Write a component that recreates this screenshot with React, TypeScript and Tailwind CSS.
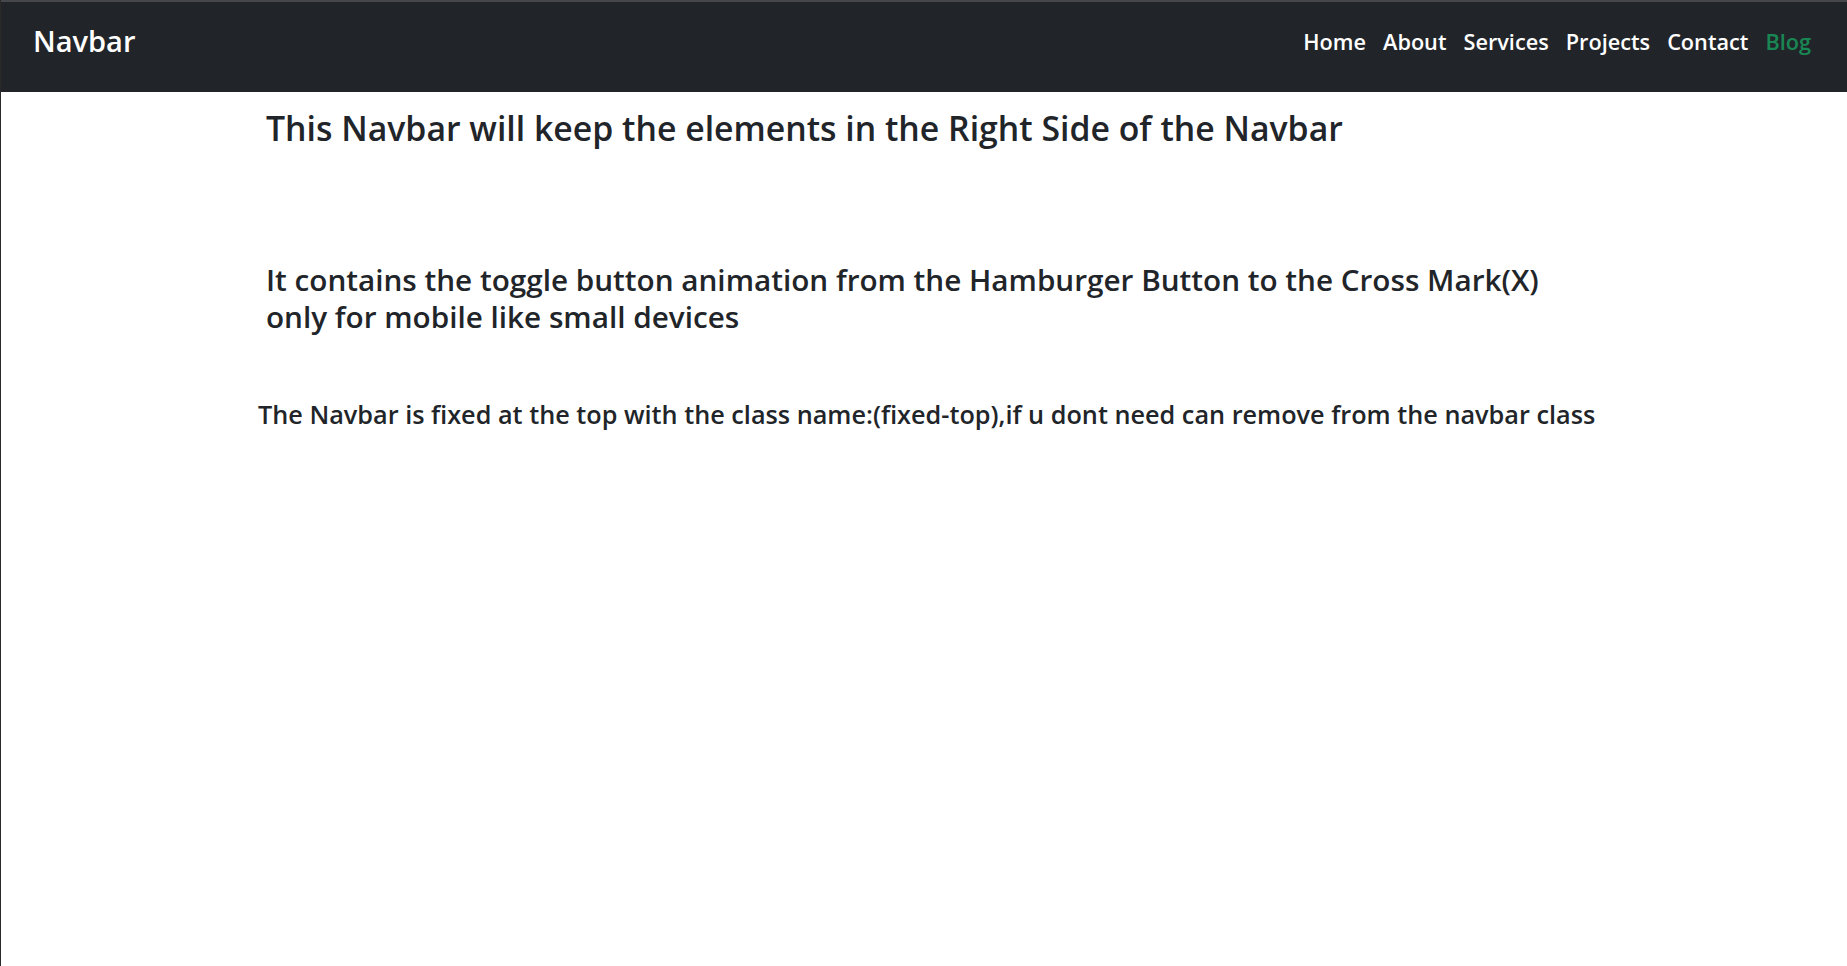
import React from "react";

const links = ["Home", "About", "Services", "Projects", "Contact"];

const App = () => {
  return (
    <div
      className="min-h-screen bg-white border-l border-[#2a2a2a]"
      style={{ fontFamily: '"Open Sans", "Noto Sans", sans-serif' }}
    >
      {/* Navbar */}
      <nav className="h-[92px] bg-[#212529] border-t-2 border-[#45474b] flex items-start justify-between pt-[24px] pl-[32px] pr-[36px]">
        <a className="text-white text-[29px] font-semibold leading-none">Navbar</a>
        <ul className="flex items-center gap-[17px] mt-[5px]">
          {links.map((link) => (
            <li key={link}>
              <a className="text-white text-[21.7px] font-semibold leading-none">{link}</a>
            </li>
          ))}
          <li>
            <a className="text-[#198754] text-[21.7px] font-semibold leading-none">Blog</a>
          </li>
        </ul>
      </nav>

      {/* Content */}
      <div className="pl-[257px] pt-[16px]">
        <h3 className="pl-[8px] text-[33.8px] font-semibold leading-[40px] text-[#212529]">
          This Navbar will keep the elements in the Right Side of the Navbar
        </h3>
        <h4 className="pl-[8px] mt-[113px] text-[29.7px] font-semibold leading-[37px] text-[#212529]">
          It contains the toggle button animation from the Hamburger Button to the Cross Mark(X)
          <br />
          only for mobile like small devices
        </h4>
        <h5 className="mt-[64px] text-[25.25px] font-semibold leading-[30px] text-[#212529]">
          The Navbar is fixed at the top with the class name:(fixed-top),if u dont need can remove from the navbar class
        </h5>
      </div>
    </div>
  );
};

export default App;
